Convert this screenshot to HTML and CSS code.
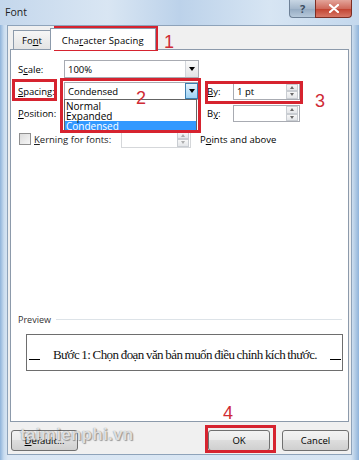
FILE: index.html
```html
<!DOCTYPE html>
<html>
<head>
<meta charset="utf-8">
<link rel="stylesheet" href="styles.css">
</head>
<body>
<div class="window">
  <div class="titlebar">
    <span class="title">Font</span>
    <div class="caption-btns">
      <div class="cbtn help">?</div>
      <div class="cbtn close">
        <svg width="10" height="9" viewBox="0 0 10 9"><path d="M1 1 L9 8 M9 1 L1 8" stroke="#fff" stroke-width="2.2" stroke-linecap="round"/></svg>
      </div>
    </div>
  </div>
  <div class="client">
    <div class="tabs">
      <div class="tab">Fo<u>n</u>t</div>
      <div class="tab active">Cha<u>r</u>acter Spacing</div>
    </div>
    <div class="panel">
      <div class="row r1">
        <span class="lbl">S<u>c</u>ale:</span>
        <div class="combo"><span class="val">100%</span><span class="arrow"><i class="tri"></i></span></div>
      </div>
      <div class="row r2">
        <span class="lbl"><u>S</u>pacing:</span>
        <div class="combo"><span class="val">Condensed</span><span class="arrow hot"><i class="tri"></i></span></div>
        <span class="lbl2"><u>B</u>y:</span>
        <div class="spin"><span class="val">1 pt</span><span class="spinbtns"><i class="up"></i><i class="dn"></i></span></div>
      </div>
      <div class="row r3">
        <span class="lbl"><u>P</u>osition:</span>
        <div class="combo blank"></div>
        <span class="lbl2">B<u>y</u>:</span>
        <div class="spin"><span class="val"></span><span class="spinbtns"><i class="up"></i><i class="dn"></i></span></div>
      </div>
      <div class="row r4">
        <span class="check"></span>
        <span class="kern"><u>K</u>erning for fonts:</span>
        <div class="spin dis"><span class="val"></span><span class="spinbtns"><i class="up"></i><i class="dn"></i></span></div>
        <span class="pts">P<u>o</u>ints and above</span>
      </div>
      <div class="preview">
        <div class="plabel"><span>Preview</span><i class="pline"></i></div>
        <div class="pbox">
          <i class="us"></i>
          <span class="ptext">Bước 1: Chọn đoạn văn bản muốn điều chỉnh kích thước.</span>
          <i class="us"></i>
        </div>
      </div>
    </div>
    <div class="buttons">
      <div class="btn"><u>D</u>efault...</div>
      <div class="spacer"></div>
      <div class="btn">OK</div>
      <div class="btn">Cancel</div>
    </div>
  </div>

  <div class="dropdown">
    <div class="item">Normal</div>
    <div class="item">Expanded</div>
    <div class="item sel">Condensed</div>
  </div>

  <div class="mark m1"></div>
  <div class="mark m2a"></div>
  <div class="mark m2b"></div>
  <div class="mark m3"></div>
  <div class="mark m4"></div>
  <span class="num n1">1</span>
  <span class="num n2">2</span>
  <span class="num n3">3</span>
  <span class="num n4">4</span>
  <span class="watermark">taimienphi.vn</span>
</div>
</body>
</html>
```
FILE: styles.css
```css
* { box-sizing: border-box; }
html, body { margin: 0; padding: 0; }
body {
  width: 359px;
  height: 460px;
  overflow: hidden;
  font-family: "Open Sans", "Noto Sans", "DejaVu Sans", sans-serif;
  font-size: 9.5px;
  color: #000;
}
u { text-decoration: underline; text-underline-offset: 1px; }
.window {
  position: relative;
  width: 359px;
  height: 460px;
  background: linear-gradient(90deg, #8fb3da 0px, #c9dcef 4px, #dbe7f4 8px, #d6e4f2 351px, #b4cde6 355px, #8fb3da 359px);
  display: flex;
  flex-direction: column;
}
.titlebar {
  height: 25px;
  display: flex;
  align-items: flex-start;
  justify-content: space-between;
  background: linear-gradient(90deg, #c4d7ec 0%, #d9e6f3 30%, #bcd2ea 50%, #d7e5f3 75%, #c4d8ed 100%);
}
.title {
  font-size: 10.5px;
  padding: 5px 0 0 5px;
  color: #1e1e1e;
}
.caption-btns { display: flex; margin-right: 7px; }
.cbtn {
  height: 18px;
  display: flex;
  align-items: center;
  justify-content: center;
  border: 1px solid #6d8096;
  border-top: none;
}
.help {
  width: 26px;
  border-radius: 0 0 0 4px;
  background: linear-gradient(#c8d6e4, #a5b8cc 50%, #94aac1 51%, #b6c8da);
  color: #3a4c60;
  font-size: 11px;
  font-weight: bold;
  border-right: none;
}
.close {
  width: 37px;
  border-radius: 0 0 4px 0;
  background: linear-gradient(#e3a49a, #cf6a5c 50%, #c0402e 51%, #d77766);
  border-color: #7c2e24;
}
.client {
  flex: 1;
  margin: 0 7px 5px 7px;
  background: #f0f0f0;
  border: 1px solid #8ea3ba;
  display: flex;
  flex-direction: column;
  padding: 1px 2px 0 2px;
}
.tabs {
  display: flex;
  padding-left: 3px;
  height: 22px;
  align-items: flex-end;
  position: relative;
  z-index: 1;
}
.tab {
  height: 19px;
  padding: 3px 8px 0 8px;
  border: 1px solid #8c9aab;
  border-bottom: none;
  background: linear-gradient(#f6f6f6, #e4e4e4);
  margin-right: -1px;
  font-size: 9.5px;
}
.tab.active {
  height: 22px;
  background: #fff;
  padding-top: 5px;
  margin-bottom: -1px;
  padding-left: 11px;
  padding-right: 11px;
  letter-spacing: 0.1px;
}
.panel {
  height: 373px;
  background: #fff;
  border: 1px solid #8c9aab;
  padding: 10px 6px 0 7px;
  display: flex;
  flex-direction: column;
}
.row {
  display: flex;
  align-items: center;
  height: 18px;
}
.r1 { margin-bottom: 4px; }
.r2 { margin-bottom: 5px; }
.r3 { margin-bottom: 8px; height: 17px; }
.lbl { width: 46px; flex: none; }
.lbl2 { width: 26px; margin-left: 8px; flex: none; }
.combo {
  width: 135px;
  height: 18px;
  border: 1px solid #a8abb2;
  display: flex;
  align-items: center;
  justify-content: space-between;
  background: #fff;
  flex: none;
}
.combo.blank { border: none; }
.val { padding-left: 3px; }
.arrow {
  width: 13px;
  height: 16px;
  border-left: 1px solid #d2d5da;
  background: linear-gradient(#fafafa, #e3e4e6);
  display: flex;
  align-items: center;
  justify-content: center;
}
.arrow.hot {
  background: linear-gradient(#e6f3fc, #bfe1f8 50%, #9fd2f4);
  border: 1px solid #3c7fb1;
}
.tri {
  width: 0; height: 0;
  border-left: 3.5px solid transparent;
  border-right: 3.5px solid transparent;
  border-top: 4px solid #000;
}
.spin {
  width: 67px;
  height: 17px;
  border: 1px solid #a8abb2;
  display: flex;
  align-items: center;
  justify-content: space-between;
  flex: none;
}
.spinbtns {
  width: 12px;
  height: 15px;
  display: flex;
  flex-direction: column;
  margin-right: 1px;
}
.spinbtns i {
  flex: 1;
  border: 1px solid #c9cdd2;
  background: linear-gradient(#f7f7f7, #e4e6e9);
  display: flex;
  align-items: center;
  justify-content: center;
  position: relative;
}
.spinbtns i.up::after, .spinbtns i.dn::after {
  content: "";
  width: 0; height: 0;
  border-left: 2.5px solid transparent;
  border-right: 2.5px solid transparent;
}
.spinbtns i.up::after { border-bottom: 3px solid #6a6a6a; }
.spinbtns i.dn::after { border-top: 3px solid #6a6a6a; }
.spin.dis { width: 70px; margin-left: 17px; border-color: #d5d7da; }
.spin.dis .spinbtns i::after { opacity: 0.5; }
.check {
  width: 12px;
  height: 12px;
  border: 1px solid #8f8f8f;
  background: linear-gradient(135deg, #dcdcdc, #f6f6f6);
  margin-left: 1px;
  flex: none;
}
.kern { margin-left: 3px; width: 70px; white-space: nowrap; color: #222; }
.pts { margin-left: 9px; }
.preview { margin-top: auto; margin-bottom: 50px; }
.plabel {
  display: flex;
  align-items: center;
  color: #333;
  font-size: 9px;
  height: 12px;
}
.pline {
  flex: 1;
  height: 1px;
  background: #dde3e8;
  margin-left: 5px;
}
.pbox {
  margin: 9px 0 0 8px;
  width: 317px;
  height: 37px;
  border: 1px solid #6e6e6e;
  display: flex;
  align-items: flex-end;
  justify-content: space-between;
  padding: 0 1px 9px 2px;
}
.us {
  width: 11px;
  height: 1px;
  background: #000;
  margin-bottom: 1px;
}
.ptext {
  font-family: "Liberation Serif", "DejaVu Serif", serif;
  font-size: 13px;
  letter-spacing: -0.55px;
  word-spacing: -0.5px;
  line-height: 13px;
  color: #111;
}
.buttons {
  display: flex;
  align-items: center;
  padding: 8px 0 0 1px;
  gap: 10px;
}
.spacer { flex: 1; }
.btn {
  width: 67px;
  height: 21px;
  border: 1px solid #707070;
  border-radius: 3px;
  background: linear-gradient(#f3f3f3, #ebebeb 45%, #dddddd 50%, #cfcfcf);
  display: flex;
  align-items: center;
  justify-content: center;
  font-size: 9.5px;
}
.btn:nth-child(3) { width: 62px; margin-right: 2px; }
.dropdown {
  position: absolute;
  left: 64px;
  top: 99px;
  width: 133px;
  height: 32px;
  background: #fff;
  border: 1px solid #646464;
  overflow: hidden;
  padding-top: 1px;
}
.item { height: 10px; line-height: 10px; padding-left: 1px; font-size: 10px; }
.item.sel { background: #3399ff; color: #fff; height: 12px; }
.mark {
  position: absolute;
  border: 3px solid #d6232f;
}
.m1 { left: 54px; top: 26px; width: 104px; height: 25px; }
.m2a { left: 12px; top: 79px; width: 45px; height: 22px; }
.m2b { left: 60px; top: 78px; width: 141px; height: 55px; }
.m3 { left: 205px; top: 81px; width: 98px; height: 23px; }
.m4 { left: 205px; top: 425px; width: 71px; height: 28px; }
.num {
  position: absolute;
  color: #cf2a34;
  font-family: "Liberation Sans", "Open Sans", sans-serif;
  font-size: 18px;
  line-height: 18px;
}
.n1 { left: 164px; top: 33px; }
.n2 { left: 136px; top: 89px; }
.n3 { left: 315px; top: 92px; }
.n4 { left: 223px; top: 404px; }
.watermark {
  position: absolute;
  left: 20px;
  top: 425px;
  font-family: "Liberation Sans", "Open Sans", sans-serif;
  font-size: 17px;
  font-weight: bold;
  color: rgba(255,255,255,0.75);
  text-shadow: 0 0 1px #777, 1px 1px 1px rgba(0,0,0,0.35);
  letter-spacing: 0.3px;
}
```
